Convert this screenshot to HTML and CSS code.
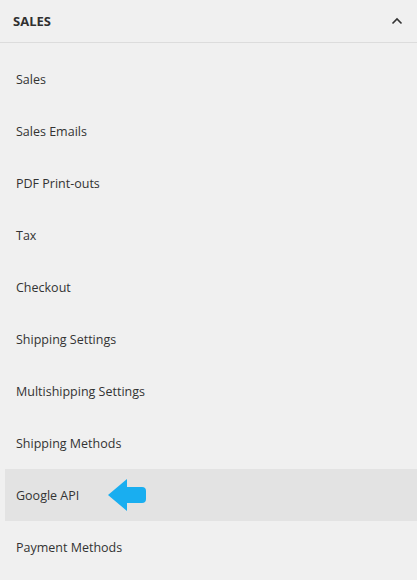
FILE: index.html
```html
<!DOCTYPE html>
<html lang="en">
<head>
    <meta charset="UTF-8">
    <meta name="viewport" content="width=device-width, initial-scale=1.0">
    <title>Sales</title>
    <link rel="stylesheet" href="styles.css">
</head>
<body>
    <div class="panel">
        <div class="panel-head">
            <span class="panel-title">SALES</span>
            <svg class="chevron" width="12" height="8" viewBox="0 0 12 8">
                <path d="M1.5 6.5 L6 2 L10.5 6.5" fill="none" stroke="#333" stroke-width="1.6"/>
            </svg>
        </div>
        <ul class="menu">
            <li>Sales</li>
            <li>Sales Emails</li>
            <li>PDF Print-outs</li>
            <li>Tax</li>
            <li>Checkout</li>
            <li>Shipping Settings</li>
            <li>Multishipping Settings</li>
            <li>Shipping Methods</li>
            <li class="active">Google API
                <svg class="arrow" width="40" height="34" viewBox="0 0 40 34">
                    <path d="M1 17 L20 1 L20 9 L35 9 Q39 9 39 13 L39 21 Q39 25 35 25 L20 25 L20 33 Z" fill="#19aef0"/>
                </svg>
            </li>
            <li>Payment Methods</li>
        </ul>
    </div>
</body>
</html>
```

FILE: styles.css
```css
body {
    margin: 0;
    background-color: #f0f0f0;
    font-family: "Open Sans", Arial, sans-serif;
    color: #333;
}
.panel {
    width: 417px;
}
.panel-head {
    display: flex;
    align-items: center;
    justify-content: space-between;
    height: 43px;
    padding: 0 14px 0 13px;
    border-bottom: 1px solid #dcdcdc;
    box-sizing: border-box;
}
.panel-title {
    font-weight: bold;
    font-size: 13px;
    color: #303030;
}
.menu {
    list-style: none;
    margin: 10px 0 0 0;
    padding: 0;
}
.menu li {
    display: flex;
    align-items: center;
    height: 52px;
    padding-left: 16px;
    font-size: 12.5px;
    color: #333;
}
.menu li.active {
    background-color: #e3e3e3;
    margin-left: 5px;
    padding-left: 11px;
}
.arrow {
    margin-left: 28px;
}
```
